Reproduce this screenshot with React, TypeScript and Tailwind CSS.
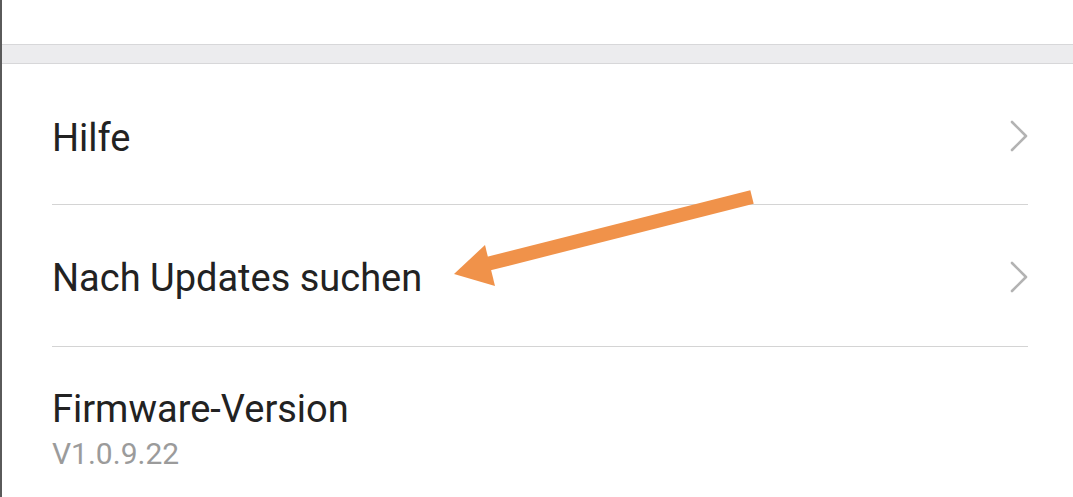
import React from "react";

function Chevron() {
  return (
    <svg width="22" height="34" viewBox="0 0 22 34" className="shrink-0">
      <path d="M4 3 L18 17 L4 31" fill="none" stroke="#b3b3b3" strokeWidth="2.6" strokeLinecap="round" strokeLinejoin="round" />
    </svg>
  );
}

export default function App() {
  return (
    <div
      className="relative h-[497px] w-full overflow-hidden bg-white border-l-2 border-[#5a5a5a]"
      style={{ fontFamily: "Roboto, 'Noto Sans', sans-serif" }}
    >
      <div className="h-[44px]" />
      <div className="h-[20px] bg-[#ececee] border-y border-[#d7d7d9]" />
      <div className="pl-[50px] pr-[45px]">
        <div className="flex h-[141px] items-center justify-between border-b border-[#d4d4d4]">
          <span className="text-[38px] leading-none text-[#222222] pt-[7px]">Hilfe</span>
          <div className="-mr-[2px] pt-[3px]"><Chevron /></div>
        </div>
        <div className="flex h-[142px] items-center justify-between border-b border-[#d4d4d4]">
          <span className="text-[38px] leading-none text-[#222222] pt-[4px]">Nach Updates suchen</span>
          <div className="-mr-[2px] pt-[2px]"><Chevron /></div>
        </div>
        <div className="flex flex-col pt-[40px]">
          <span className="text-[38px] leading-[44px] text-[#222222]">Firmware-Version</span>
          <span className="text-[30px] leading-[38px] text-[#9b9b9b] mt-[4px]">V1.0.9.22</span>
        </div>
      </div>
      <svg className="pointer-events-none absolute left-0 top-0" width="1073" height="497" viewBox="0 0 1073 497">
        <line x1="750" y1="197" x2="485" y2="264" stroke="#f0924a" strokeWidth="14" />
        <polygon points="452,274 483,245 493,286" fill="#f0924a" />
      </svg>
    </div>
  );
}
